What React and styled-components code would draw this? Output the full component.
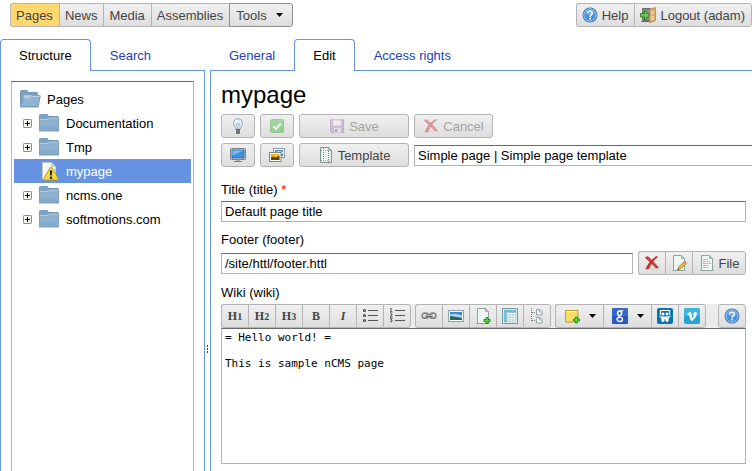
import React from "react";
import styled, { createGlobalStyle, css } from "styled-components";

const BLUE = "#6694e3";
const LINE = "#b4b4b4";
const DARK = "#6a6a6a";

const GlobalStyle = createGlobalStyle`
  * { box-sizing: border-box; }
  body {
    margin: 0;
    background: #fff;
    color: #000;
    font: 13px/17px "Liberation Sans", Arial, sans-serif;
    overflow: hidden;
  }
  button, input, textarea { font: inherit; color: inherit; margin: 0; outline: none; }
  svg { display: block; flex: none; }
`;

/* ---------- layout ---------- */

const Page = styled.div`
  min-height: 100vh;
  display: flex;
  flex-direction: column;
`;

const TopBar = styled.header`
  display: flex;
  justify-content: space-between;
  padding: 3px 0 0 10px;
  margin-bottom: 12px;
`;

const Workspace = styled.main`
  flex: 1;
  display: flex;
`;

const Pane = styled.section`
  display: flex;
  flex-direction: column;
  min-width: 0;
  flex: ${(p) => (p.$side ? "0 0 205px" : "1")};
`;

const PaneBody = styled.div`
  flex: 1;
  display: flex;
  flex-direction: column;
  border-left: 1px solid ${BLUE};
  border-right: ${(p) => (p.$side ? `1px solid ${BLUE}` : "0")};
  padding: ${(p) => (p.$side ? "10px 10px 0" : "10px 6px 7px 10px")};
`;

const Splitter = styled.div`
  flex: 0 0 5px;
  display: flex;
  flex-direction: column;
  align-items: center;
  gap: 1px;
  padding-top: 306px;
`;

const Dot = styled.i`
  width: 1px;
  height: 2px;
  background: #444;
`;

/* ---------- tabs ---------- */

const TabRow = styled.div`
  display: flex;
  height: 32px;
`;

const Tab = styled.button`
  background: #fff;
  padding: 1px 19px 0;
  border: 0;
  border-bottom: 1px solid ${BLUE};
  color: #2440b8;
  ${(p) =>
    p.$active &&
    css`
      color: #000;
      padding: 0 18px 1px;
      border: 1px solid ${BLUE};
      border-bottom: 0;
      border-radius: 4px 4px 0 0;
    `}
`;

const TabFill = styled.div`
  flex: 1;
  border-bottom: 1px solid ${BLUE};
`;

/* ---------- buttons ---------- */

const ButtonGroup = styled.div`
  display: flex;
  height: 24px;
  flex: none;
`;

const Button = styled.button`
  height: 24px;
  display: flex;
  align-items: center;
  justify-content: center;
  gap: ${(p) => (p.$gap ? "9px" : "4px")};
  width: ${(p) => (p.$width ? `${p.$width}px` : "auto")};
  padding: ${(p) => (p.$width ? "0" : "0 6px 0 5px")};
  border: 1px solid ${LINE};
  border-radius: 3px;
  color: #444;
  background: linear-gradient(#f0f0f0, #dedede);
  white-space: nowrap;
  flex: none;

  &:disabled { color: #a3a3a3; }
  &:disabled svg { opacity: 0.45; }

  ${ButtonGroup} > & {
    border-radius: 0;
    border-right-width: 0;
  }
  ${ButtonGroup} > &:first-child { border-radius: 3px 0 0 3px; }
  ${ButtonGroup} > &:last-child { border-radius: 0 3px 3px 0; border-right-width: 1px; }

  ${(p) => p.$selected && css`background: #ffd76e;`}
  ${(p) =>
    p.$menu &&
    css`
      border-color: #8c8c8c;
      padding: 0 9px 0 6px;
    `}
`;

/* ---------- tree ---------- */

const Tree = styled.ul`
  flex: 1;
  list-style: none;
  margin: 0;
  padding: 5px 2px 0;
  border: 1px solid ${LINE};
  border-top-color: ${DARK};
  border-bottom: 0;
`;

const TreeRow = styled.li`
  height: 24px;
  display: flex;
  align-items: center;
  padding-left: ${(p) => (p.$root ? "5px" : "9px")};
  color: ${(p) => (p.$selected ? "#fff" : "#000")};
  background: ${(p) => (p.$selected ? BLUE : "transparent")};
`;

const Expander = styled.button`
  width: 9px;
  height: 9px;
  padding: 0;
  border: 0;
  background: none;
  visibility: ${(p) => (p.$hidden ? "hidden" : "visible")};
`;

const TreeIcon = styled.span`
  width: 22px;
  margin: ${(p) => (p.$root ? "0 6px 0 0" : "0 6px")};
`;

/* ---------- editor form ---------- */

const Heading = styled.h1`
  margin: 0 0 5px;
  font-size: 24px;
  font-weight: normal;
  line-height: 28px;
`;

const Row = styled.div`
  display: flex;
  align-items: center;
  gap: 5px;
  margin-bottom: ${(p) => (p.$last ? "15px" : p.$field ? "10px" : "5px")};
`;

const Label = styled.label`
  line-height: 16px;
  margin-bottom: 3px;
`;

const Required = styled.span`
  color: #f00;
`;

const TextInput = styled.input`
  flex: 1;
  min-width: 0;
  height: 21px;
  padding: 0 3px;
  background: #fff;
  border: 1px solid ${LINE};
  border-top-color: ${DARK};
  border-radius: 0;
  margin-right: ${(p) => (p.$bleed ? "-7px" : "0")};
`;

const EditorBar = styled.div`
  display: flex;
  gap: 4px;
  background: #ececec;
  border-radius: 3px 3px 0 0;
`;

const Spacer = styled.div`
  flex: 1;
`;

const Source = styled.textarea`
  flex: 1;
  min-height: 136px;
  resize: none;
  padding: 2px 3px;
  border: 1px solid ${LINE};
  border-top-color: ${DARK};
  border-radius: 0;
  font: 11px/13px "DejaVu Sans Mono", monospace;
`;

const Glyph = styled.span`
  font: ${(p) => (p.$italic ? "italic " : "")}bold 12px/15px "Liberation Serif", "Times New Roman", serif;
  color: #444;
`;

const Numeral = styled.span`
  font-size: 10px;
`;

/* ---------- icons ---------- */

const Svg = ({ w = 16, h = 16, children }) => (
  <svg width={w} height={h} viewBox={`0 0 ${w} ${h}`} aria-hidden="true">
    {children}
  </svg>
);

const Arrow = () => (
  <Svg w={7} h={4}>
    <path d="M0 0h7L3.5 4z" fill="#000" />
  </Svg>
);

const HelpIcon = () => (
  <Svg>
    <circle cx="8" cy="8" r="7.5" fill="#2c68b4" />
    <circle cx="8" cy="8" r="6.2" fill="#4a8fd6" stroke="#bcd9f4" strokeWidth="0.9" />
    <path d="M2.5 7a5.6 5.6 0 0 1 11 0q-5.5 2.5-11 0z" fill="#79b0e6" opacity=".6" />
    <path d="M5.8 6.2C5.8 3.6 10.3 3.5 10.3 6.1c0 1.7-2.2 1.7-2.2 3.6" fill="none" stroke="#fff" strokeWidth="1.6" />
    <rect x="7.2" y="10.7" width="1.8" height="1.7" fill="#fff" />
  </Svg>
);

const LogoutIcon = () => (
  <Svg>
    <path d="M2.500 1.500h8v12h-8z" fill="#8b8b86" stroke="#6c6e69" />
    <path d="M1 14.500h9" stroke="#666" />
    <path d="M9.500 2.500L15.500 .5v13.200L9.500 15.700z" fill="#dcab6f" stroke="#b98547" strokeWidth=".8" />
    <path d="M11 4.200l3-1v4l-3 .7zM11 9.400l3-.7v4l-3 1z" fill="#ebc896" />
    <path d="M.6 6.500h3.900v-3l5 4.800-5 4.700v-3H.6z" fill="#6cc653" stroke="#28761f" strokeWidth=".9" />
  </Svg>
);

const ClosedFolder = () => (
  <Svg w={22} h={20}>
    <path d="M1.500 2.200q0-.7.7-.7h7l1.300 2h9.300q.7 0 .7.700V17.500h-19z" fill="#7fa5c5" stroke="#7398b8" />
    <path d="M1.500 6.500q0-.8.8-.8h7.500l1.700-1.200h8.200q.8 0 .8.800v12.200h-19z" fill="#8fb2d0" stroke="#7ba0c0" />
    <path d="M2 6.500h8l1.700-1.300H20" fill="none" stroke="#b4cde2" />
    <path d="M2 13h18v4H2z" fill="#7da4c6" opacity=".55" />
    <path d="M1 18.500h20" stroke="#aebdca" opacity=".7" />
  </Svg>
);

const OpenFolder = () => (
  <Svg w={22} h={20}>
    <path d="M1.500 2.200q0-.7.7-.7h6l1.300 2h8.300q.7 0 .7.700v13H1.500z" fill="#7ba1c0" stroke="#7398b6" />
    <path d="M4.500 6.500h12v3h-12z" fill="#e3eaef" />
    <path d="M4.500 8.200h7l1.500-1.400h8.200l-2 10.700H1.600z" fill="#8fb3d3" stroke="#759dbf" />
    <path d="M5 8.900h7l1.500-1.400h7" fill="none" stroke="#b9d2e7" />
    <path d="M1 18.500h19" stroke="#aebdca" opacity=".7" />
  </Svg>
);

const WarningPage = () => (
  <Svg w={22} h={20}>
    <path d="M4.500 1.500h9l4 4v12.500h-13z" fill="#f4f7f3" stroke="#c4cbc4" />
    <path d="M13.500 1.500v4h4z" fill="#d2dbd2" stroke="#b5beb5" strokeWidth=".6" />
    <path d="M12.300 6.300q.7-.8 1.400 0l6.800 11.700q.2.900-.8 1H6.300q-1-.1-.8-1z" fill="#f2d93c" stroke="#b49710" strokeWidth=".9" />
    <path d="M11.900 9.500h2.200l-.4 5h-1.400z" fill="#111" />
    <circle cx="13" cy="16.700" r="1.200" fill="#111" />
  </Svg>
);

const PlusIcon = () => (
  <Svg w={9} h={9}>
    <rect x=".5" y=".5" width="8" height="8" rx=".7" fill="#f5f4f0" stroke="#7e8ea3" />
    <path d="M2 4.500h5M4.500 2v5" stroke="#000" />
  </Svg>
);

const BulbIcon = () => (
  <Svg>
    <path d="M5.700 11.200C5.500 8.800 3.500 7.800 3.500 5.200a4.500 4.500 0 0 1 9 0c0 2.600-2 3.600-2.200 6z" fill="#dfeaf5" stroke="#8aa2bb" strokeWidth=".9" />
    <path d="M6.500 5.500l.9 5M9.500 5.500l-.9 5M6.500 5.500l1.500 1 1.500-1" fill="none" stroke="#9db3c8" strokeWidth=".7" />
    <path d="M5 4.500q.5-2 2.400-2.400" fill="none" stroke="#fff" strokeWidth="1.200" />
    <path d="M6 11h4v4.200q-2 1.400-4 0z" fill="#555" />
    <path d="M6 12.300h4M6 14h4" stroke="#a5a5a5" strokeWidth=".7" />
  </Svg>
);

const CheckIcon = () => (
  <Svg>
    <rect x="1.500" y="1.500" width="13" height="13" rx="1.500" fill="#48bb48" stroke="#3aa23c" />
    <path d="M2 8h12v6H2z" fill="#2fa82f" opacity=".4" />
    <path d="M4.200 8.200l2.700 2.700 5-5.300" fill="none" stroke="#fff" strokeWidth="2.200" />
  </Svg>
);

const SaveIcon = () => (
  <Svg>
    <path d="M1.500 1.500h13v13h-12l-1-1z" fill="#b48cc6" stroke="#9a6cb0" />
    <path d="M4 1.500h8v6H4z" fill="#f6f1f8" />
    <path d="M4 2h8" stroke="#e08080" />
    <path d="M5 10h7v4.500H5z" fill="#e3dbe8" />
    <path d="M6 11h2v3H6z" fill="#76508a" />
  </Svg>
);

const CrossIcon = () => (
  <Svg>
    <path d="M3 14.500q5-1.500 10.500 0" stroke="#bbb" fill="none" opacity=".6" />
    <path d="M1.500 2.800Q3 1 4.600 2.200 10 7 14.300 12.700L12 12.900Q7 7 1.500 2.800z" fill="#dc4343" stroke="#ad2020" strokeWidth=".8" />
    <path d="M13.500 1.800Q6.500 7.500 4.800 13.600L2 13.900Q4.500 7 11.800 1.800z" fill="#cf3333" stroke="#ad2020" strokeWidth=".8" />
  </Svg>
);

const MonitorIcon = () => (
  <Svg>
    <rect x=".5" y="1.500" width="15" height="11" rx=".8" fill="#d8dad8" stroke="#7c807e" />
    <rect x="2" y="3" width="12" height="8" fill="#3f92dc" stroke="#1f65ab" strokeWidth=".8" />
    <path d="M2.500 3.500h11l-11 5z" fill="#80bbee" />
    <path d="M6.500 12.500h3v1.500h-3z" fill="#999" />
    <path d="M4 14.500h8" stroke="#7c807e" />
  </Svg>
);

const PhotosIcon = () => (
  <Svg>
    <rect x="4.500" y="1.500" width="11" height="9" fill="#fff" stroke="#8a9aa8" />
    <path d="M6 3h8v6H6z" fill="#3e8ad6" />
    <path d="M6 5q4-2 8 0v2H6z" fill="#b8daf5" />
    <rect x=".5" y="5.500" width="11.500" height="9" fill="#fff" stroke="#83857d" />
    <path d="M2 7h8.500v6H2z" fill="#e8ac13" />
    <path d="M2 10.500l2-.8 2 .6 4.500-1.300v4H2z" fill="#5d4507" />
    <circle cx="7" cy="8.500" r="1.100" fill="#fff0a0" />
  </Svg>
);

const TemplateIcon = () => (
  <Svg>
    <path d="M2.500 .5h8l3 3v12h-11z" fill="#edf3f1" stroke="#81938f" />
    <path d="M10.500 .5v3h3z" fill="#cbd8d4" stroke="#81938f" strokeWidth=".7" />
    <path d="M5.500 1v14M10.500 4v11" stroke="#658f92" strokeDasharray="1 1" />
    <path d="M3 3.500h8M3 13.500h10" stroke="#94b1b1" strokeDasharray="1 1" />
  </Svg>
);

const PageShape = ({ lines }) => (
  <>
    <path d="M1 15.500h14" stroke="#b3bab6" />
    <path d="M2.500 .5h8l3 3v12h-11z" fill="#eff5f3" stroke="#8fa39e" />
    <path d="M10.500 .5v3h3z" fill="#c6d6d1" stroke="#8fa39e" strokeWidth=".7" />
    {lines && <path d="M4 4.500h5M4 6.500h7M4 8.500h8M4 10.500h6M4 12.500h5" stroke="#a6bcb8" strokeDasharray="3 .6 2 .5" />}
  </>
);

const FileIcon = () => (
  <Svg>
    <PageShape lines />
  </Svg>
);

const EditPageIcon = () => (
  <Svg>
    <PageShape />
    <path d="M6.700 14.800l.8-2.800 5.700-5.200 1.900 1.900-5.600 5.400z" fill="#eec337" stroke="#8d6d14" strokeWidth=".7" />
    <path d="M12.600 7.300l1.300-1.200 1.900 1.900-1.300 1.200z" fill="#df7464" />
    <path d="M6.700 14.800l.4-1.400 1 1z" fill="#222" />
  </Svg>
);

const GreenPlus = ({ x, y }) => (
  <path
    d={`M${x + 2.500} ${y + 0.5}h2v2h2v2h-2v2h-2v-2h-2v-2h2z`}
    fill="#57dc40"
    stroke="#158c17"
    strokeWidth=".9"
  />
);

const AddPageIcon = () => (
  <Svg>
    <PageShape />
    <GreenPlus x={8.500} y={9} />
  </Svg>
);

const ListIcon = ({ ordered }) => (
  <Svg>
    <path d="M6 2.500h10M6 7.500h10M6 12.500h10" stroke="#555" />
    {ordered ? (
      <path
        d="M1 1l1-1v4M1 4h2.500M1 6h2v1.200L1 9h2.500M1 10.700h2.200L2 12q1.500 0 1.200 1.200-.7 1-2.200.4"
        fill="none"
        stroke="#444"
        strokeWidth=".9"
      />
    ) : (
      <g fill="none" stroke="#444" strokeWidth="1.100">
        <circle cx="2.500" cy="2.500" r="1" />
        <circle cx="2.500" cy="7.500" r="1" />
        <circle cx="2.500" cy="12.500" r="1" />
      </g>
    )}
  </Svg>
);

const LinkIcon = () => (
  <Svg>
    <g fill="none">
      <rect x="1.200" y="5.200" width="6" height="5" rx="2.300" stroke="#858585" strokeWidth="1.700" />
      <rect x="8.800" y="5.200" width="6" height="5" rx="2.300" stroke="#858585" strokeWidth="1.700" />
      <path d="M4.500 7.700h7" stroke="#666" strokeWidth="2.400" />
      <path d="M5 7.400h6" stroke="#d6d6d6" strokeWidth=".8" />
    </g>
  </Svg>
);

const ImageIcon = () => (
  <Svg>
    <rect x=".5" y="2.500" width="15" height="11" fill="#fff" stroke="#8fa0b0" />
    <path d="M2 4h12v8H2z" fill="#3c86d2" />
    <path d="M2 6.500q5-2 12 1v2H2z" fill="#a9d4f6" />
    <path d="M2 8q6 0 12 2.600V12H2z" fill="#2b6359" />
  </Svg>
);

const TableIcon = () => (
  <Svg>
    <rect x=".5" y=".5" width="15" height="15" fill="#fff" stroke="#7d9699" />
    <path d="M2 2h12v3H2zM2 5h3v9H2z" fill="#49bdec" />
    <path d="M2 4.500h12M2 7h12M2 9.500h12M2 12h12M5 2v12M8 2v12M11 2v12" stroke="#acc9d1" strokeWidth=".8" />
    <path d="M2 2h12v12H2z" fill="none" stroke="#88b9cb" strokeWidth=".7" />
  </Svg>
);

const TreeDocIcon = () => (
  <Svg>
    <path d="M2.500 0v13M3 4.500h4M3 12.500h4" stroke="#777" fill="none" strokeDasharray="1 1" />
    <path d="M7.500 1.500h3.500l2 2v3.500H7.500zM7.500 9.500h3.500l2 2v3.500H7.500z" fill="#f2f8f7" stroke="#8aa5a4" />
    <path d="M10.500 1.500v2.500h2.500M10.500 9.500v2.500h2.500" fill="none" stroke="#8aa5a4" strokeWidth=".8" />
  </Svg>
);

const NoteIcon = () => (
  <Svg>
    <path d="M1.500 2.500h12.500v8.500l-3 3H1.500z" fill="#f3df67" stroke="#bea22b" />
    <path d="M2.500 3.500h10.500" stroke="#fbf2ab" />
    <GreenPlus x={9} y={8.500} />
  </Svg>
);

const GoogleIcon = () => (
  <Svg>
    <rect width="16" height="16" rx="1" fill="#2a56bd" />
    <path d="M0 0h16v8H0z" fill="#4878d8" opacity=".5" />
    <g fill="none" stroke="#fff">
      <ellipse cx="7.600" cy="5.200" rx="2" ry="2.300" strokeWidth="1.500" />
      <path d="M8.500 2.700h2.700M7.300 7.500q-1 1 .4 1.500" strokeWidth="1.200" />
      <ellipse cx="7.800" cy="11.400" rx="2.700" ry="2.100" strokeWidth="1.400" />
    </g>
  </Svg>
);

const SlideShareIcon = () => (
  <Svg>
    <rect width="16" height="16" rx="2" fill="#0b75ad" />
    <path d="M3.500 7V2.500h9V7" fill="none" stroke="#fff" strokeWidth="1.200" />
    <circle cx="6" cy="5.900" r="1.500" fill="#fff" />
    <circle cx="10" cy="5.900" r="1.500" fill="#fff" />
    <path d="M2 7.200q1.500 1.300 3.700 1.200h4.600q2.200.1 3.700-1.200-.4 2-2.300 2.900v2.400q-.3 1.500-1.700 1.400-1.400-.2-1.500-1.500v-1.200h-1v1.200q-.1 1.300-1.500 1.500-1.400.1-1.700-1.400v-2.400Q2.400 9.200 2 7.200z" fill="#fff" />
  </Svg>
);

const VimeoIcon = () => (
  <Svg>
    <rect width="16" height="16" rx="2" fill="#23a5cf" />
    <path d="M0 2q0-2 2-2h12q2 0 2 2v6H0z" fill="#57c4e4" opacity=".55" />
    <path d="M3.200 6.200l2.300-2q1.400-.5 1.800 1.200l.9 4q.3.700.9-.2l1-1.700q.3-1.200-1.200-.7.700-2.600 2.700-2.700 1.700.1 1.200 2.300-.6 2.600-3.600 5.800-2 1.500-2.900-.8L5 6.900q-.3-1-1.300.1z" fill="#fff" />
  </Svg>
);

/* ---------- page ---------- */

const treeItems = [
  { name: "Documentation" },
  { name: "Tmp" },
  { name: "mypage", page: true },
  { name: "ncms.one" },
  { name: "softmotions.com" },
];

const formatButtons = [
  ["Heading 1", <Glyph>H<Numeral>1</Numeral></Glyph>],
  ["Heading 2", <Glyph>H<Numeral>2</Numeral></Glyph>],
  ["Heading 3", <Glyph>H<Numeral>3</Numeral></Glyph>],
  ["Bold", <Glyph>B</Glyph>],
  ["Italic", <Glyph $italic>I</Glyph>],
  ["Bulleted list", <ListIcon />],
  ["Numbered list", <ListIcon ordered />],
];

const insertButtons = [
  ["Link", <LinkIcon />],
  ["Image", <ImageIcon />],
  ["Add page", <AddPageIcon />],
  ["Table", <TableIcon />],
  ["Page tree", <TreeDocIcon />],
];

const IconButtons = ({ items }) => (
  <ButtonGroup>
    {items.map(([label, icon], i) => (
      <Button key={label} aria-label={label} $width={i === items.length - 1 ? 28 : 27}>
        {icon}
      </Button>
    ))}
  </ButtonGroup>
);

export default function App() {
  return (
    <Page>
      <GlobalStyle />
      <TopBar>
        <ButtonGroup>
          <Button $selected>Pages</Button>
          <Button>News</Button>
          <Button>Media</Button>
          <Button>Assemblies</Button>
          <Button $menu $gap>
            Tools <Arrow />
          </Button>
        </ButtonGroup>
        <ButtonGroup>
          <Button><HelpIcon />Help</Button>
          <Button><LogoutIcon />Logout (adam)</Button>
        </ButtonGroup>
      </TopBar>

      <Workspace>
        <Pane $side>
          <TabRow role="tablist">
            <Tab role="tab" aria-selected="true" $active>Structure</Tab>
            <Tab role="tab" aria-selected="false">Search</Tab>
            <TabFill />
          </TabRow>
          <PaneBody $side>
            <Tree>
              <TreeRow $root>
                <TreeIcon $root><OpenFolder /></TreeIcon>
                Pages
              </TreeRow>
              {treeItems.map(({ name, page }) => (
                <TreeRow key={name} $selected={page}>
                  <Expander aria-label={`Expand ${name}`} $hidden={page}><PlusIcon /></Expander>
                  <TreeIcon>{page ? <WarningPage /> : <ClosedFolder />}</TreeIcon>
                  {name}
                </TreeRow>
              ))}
            </Tree>
          </PaneBody>
        </Pane>

        <Splitter>
          <Dot /><Dot /><Dot />
        </Splitter>

        <Pane>
          <TabRow role="tablist">
            <Tab role="tab" aria-selected="false">General</Tab>
            <Tab role="tab" aria-selected="true" $active>Edit</Tab>
            <Tab role="tab" aria-selected="false">Access rights</Tab>
            <TabFill />
          </TabRow>
          <PaneBody>
            <Heading>mypage</Heading>
            <Row>
              <Button $width={34} aria-label="Hint"><BulbIcon /></Button>
              <Button $width={34} aria-label="Publish" disabled><CheckIcon /></Button>
              <Button $width={110} disabled><SaveIcon />Save</Button>
              <Button $width={79} disabled><CrossIcon />Cancel</Button>
            </Row>
            <Row $last>
              <Button $width={34} aria-label="Preview"><MonitorIcon /></Button>
              <Button $width={34} aria-label="Media"><PhotosIcon /></Button>
              <Button $width={110}><TemplateIcon />Template</Button>
              <TextInput $bleed readOnly aria-label="Template" value="Simple page | Simple page template" />
            </Row>

            <Label htmlFor="title">Title (title) <Required>*</Required></Label>
            <Row $field>
              <TextInput id="title" defaultValue="Default page title" />
            </Row>

            <Label htmlFor="footer">Footer (footer)</Label>
            <Row $field>
              <TextInput id="footer" defaultValue="/site/httl/footer.httl" />
              <ButtonGroup>
                <Button $width={27} aria-label="Remove"><CrossIcon /></Button>
                <Button $width={27} aria-label="Edit file"><EditPageIcon /></Button>
                <Button $width={54}><FileIcon />File</Button>
              </ButtonGroup>
            </Row>

            <Label htmlFor="wiki">Wiki (wiki)</Label>
            <EditorBar role="toolbar">
              <IconButtons items={formatButtons} />
              <IconButtons items={insertButtons} />
              <ButtonGroup>
                <Button $width={48} $gap aria-label="Note"><NoteIcon /><Arrow /></Button>
                <Button $width={48} $gap aria-label="Google"><GoogleIcon /><Arrow /></Button>
                <Button $width={27} aria-label="SlideShare"><SlideShareIcon /></Button>
                <Button $width={28} aria-label="Vimeo"><VimeoIcon /></Button>
              </ButtonGroup>
              <Spacer />
              <Button $width={28} aria-label="Help"><HelpIcon /></Button>
            </EditorBar>
            <Source id="wiki" spellCheck={false} defaultValue={"= Hello world! =\n\nThis is sample nCMS page"} />
          </PaneBody>
        </Pane>
      </Workspace>
    </Page>
  );
}
